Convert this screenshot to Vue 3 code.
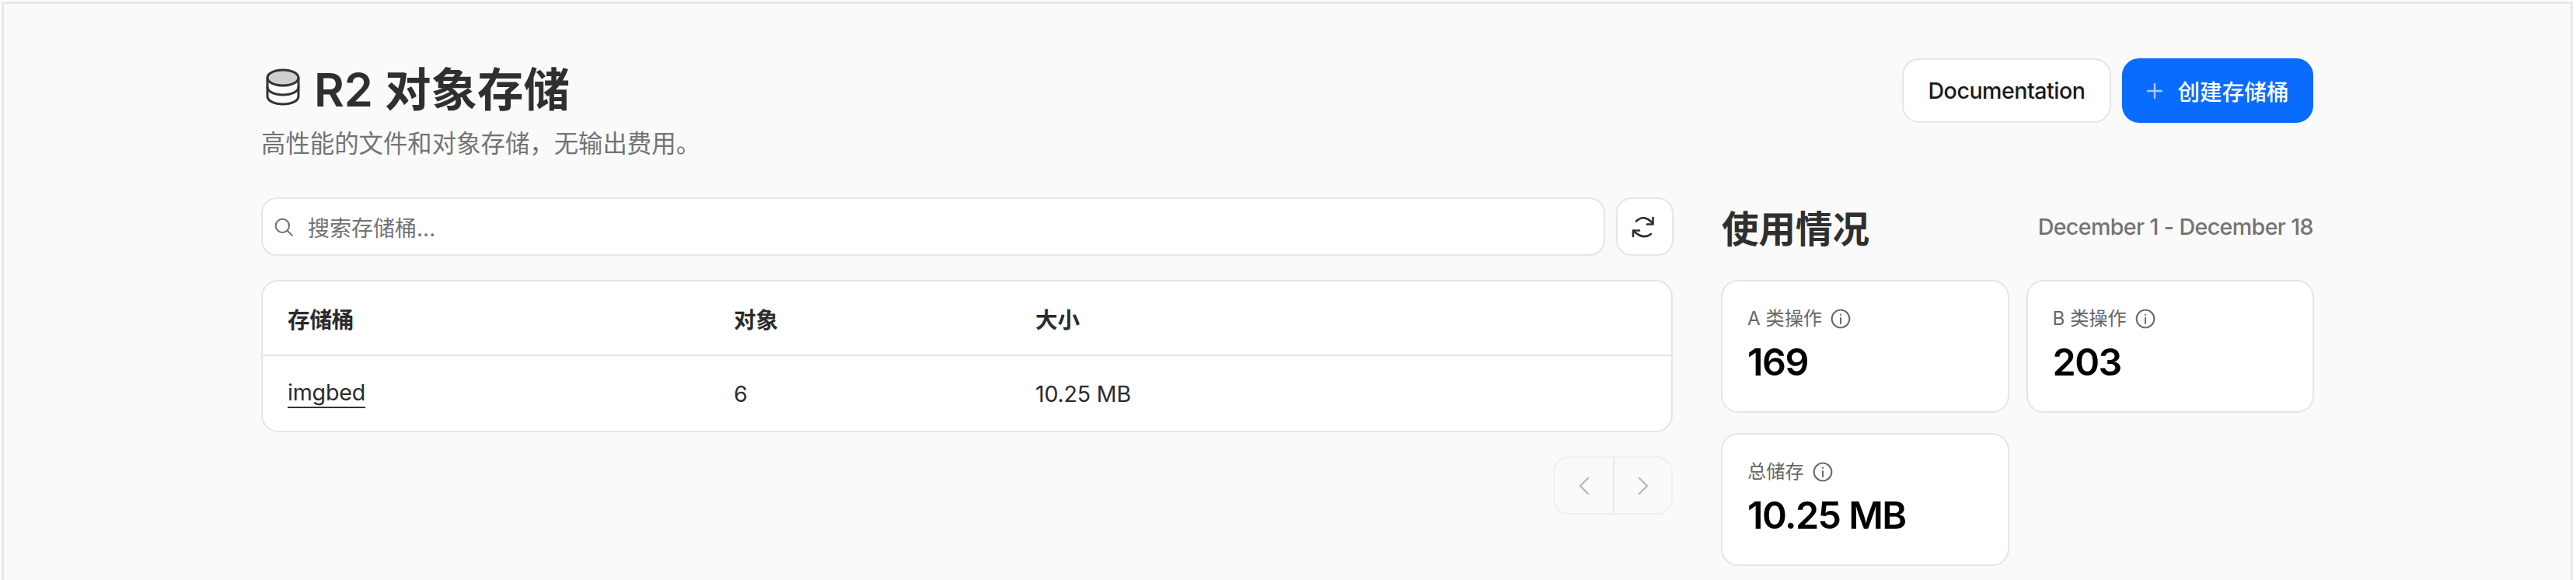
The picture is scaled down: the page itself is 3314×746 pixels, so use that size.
<script setup>
const columns = ['存储桶', '对象', '大小'];
const buckets = [{ name: 'imgbed', objects: 6, size: '10.25 MB' }];
const stats = [
  { label: 'A 类操作', value: '169' },
  { label: 'B 类操作', value: '203' },
  { label: '总储存', value: '10.25 MB' },
];
</script>

<template>
  <div class="frame">
    <main class="page">
      <header class="head">
        <div>
          <h1 class="title">
            <svg class="db-icon" viewBox="0 0 24 24" fill="none" stroke="#333" stroke-width="1.5" stroke-linecap="round" stroke-linejoin="round">
              <ellipse cx="12" cy="6" rx="10" ry="5" fill="#cfcfcf" />
              <path d="M2 6v12c0 2.800 4.500 5 10 5s10-2.200 10-5V6" />
              <path d="M2 12c0 2.800 4.500 5 10 5s10-2.200 10-5" />
            </svg>
            R2 对象存储
          </h1>
          <p class="sub">高性能的文件和对象存储，无输出费用。</p>
        </div>
        <div class="actions">
          <button class="btn">Documentation</button>
          <button class="btn primary">
            <svg class="plus" viewBox="0 0 20 20" fill="none" stroke="#a9c9ff" stroke-width="2.400" stroke-linecap="round"><path d="M10 1v18M1 10h18" /></svg>
            创建存储桶
          </button>
        </div>
      </header>

      <div class="content">
        <section class="left">
          <div class="search-row">
            <div class="search">
              <svg class="search-icon" viewBox="0 0 24 24" fill="none" stroke="#6e6e6e" stroke-width="1.8" stroke-linecap="round"><circle cx="10.500" cy="10.500" r="8" /><path d="m16.500 16.500 5.500 5.500" /></svg>
              <span>搜索存储桶...</span>
            </div>
            <button class="refresh">
              <svg viewBox="0 0 54 54" fill="none" stroke="#2f2f2f" stroke-width="2.600" stroke-linecap="round" stroke-linejoin="round">
                <path d="M16 19.500Q26 10 37 22" />
                <path d="M37.500 15V23.500H30" />
                <path d="M35 36Q25 44 12.500 32" />
                <path d="M12 39V31.500H20" />
              </svg>
            </button>
          </div>

          <div class="table">
            <div class="row header">
              <div v-for="c in columns" :key="c">{{ c }}</div>
            </div>
            <div v-for="b in buckets" :key="b.name" class="row body">
              <div><a class="link">{{ b.name }}</a></div>
              <div>{{ b.objects }}</div>
              <div>{{ b.size }}</div>
            </div>
          </div>

          <div class="pager-wrap">
            <div class="pager">
              <button>
                <svg viewBox="0 0 16 24" fill="none" stroke="#b8b8b8" stroke-width="2.400" stroke-linecap="round" stroke-linejoin="round"><path d="M13 2 3 12l10 10" /></svg>
              </button>
              <button>
                <svg viewBox="0 0 16 24" fill="none" stroke="#b8b8b8" stroke-width="2.400" stroke-linecap="round" stroke-linejoin="round"><path d="m3 2 10 10L3 22" /></svg>
              </button>
            </div>
          </div>
        </section>

        <aside class="right">
          <div class="usage-head">
            <h2>使用情况</h2>
            <span>December 1 - December 18</span>
          </div>
          <div class="cards">
            <div v-for="s in stats" :key="s.label" class="card">
              <div class="label">
                {{ s.label }}
                <svg class="info" viewBox="0 0 24 24" fill="none" stroke="#666" stroke-width="1.800" stroke-linecap="round"><circle cx="12" cy="12" r="10.500" /><path d="M12 11v6.500M12 7v.3" /></svg>
              </div>
              <div class="value">{{ s.value }}</div>
            </div>
          </div>
        </aside>
      </div>
    </main>
  </div>
</template>

<style>
html,
body {
  background: #fff;
  overflow: hidden;
}
</style>

<style scoped>
.frame {
  margin: 2px 4px 0 2px;
  height: 744px;
  box-sizing: border-box;
  border: 3px solid #e8e8e8;
  border-bottom: 0;
  background: #fafafa;
  color: #2f2f2f;
  font-family: Inter, "Noto Sans CJK SC", sans-serif;
}
.page {
  width: 2640px;
  margin-left: 331px;
  padding-top: 70px;
}
.head {
  display: flex;
  justify-content: space-between;
  align-items: flex-start;
}
.title {
  display: flex;
  align-items: center;
  gap: 16px;
  margin: 4px 0 0 4px;
  font-size: 59.500px;
  line-height: 72px;
  font-weight: 600;
}
.db-icon {
  width: 48px;
  height: 48px;
  margin-top: -6px;
}
.sub {
  margin: 14px 0 0;
  font-size: 31.400px;
  line-height: 40px;
  color: #737373;
}
.actions {
  display: flex;
  gap: 14px;
}
.btn {
  display: flex;
  align-items: center;
  justify-content: center;
  width: 269px;
  height: 83px;
  border: 2px solid #e5e5e5;
  border-radius: 22px;
  background: #fff;
  font: 500 28.600px Inter, "Noto Sans CJK SC", sans-serif;
  letter-spacing: -0.5px;
  color: #1a1a1a;
}
.primary {
  width: 246px;
  gap: 20px;
  background: #0a6cff;
  border-color: #0a6cff;
  color: #fff;
  letter-spacing: 0;
}
.plus {
  width: 20px;
  height: 20px;
}
.content {
  display: grid;
  grid-template-columns: 1816px 762px;
  gap: 62px;
  margin-top: 49px;
}
.search-row {
  display: flex;
  gap: 14px;
  height: 75px;
  margin-right: -1px;
}
.search {
  flex: 1;
  display: flex;
  align-items: center;
  gap: 18px;
  padding-left: 14px;
  background: #fff;
  border: 2px solid #e5e5e5;
  border-radius: 20px;
  font-size: 28px;
  color: #737373;
}
.search-icon {
  width: 26px;
  height: 26px;
}
.refresh {
  width: 74px;
  padding: 0;
  display: flex;
  align-items: center;
  justify-content: center;
  background: #fff;
  border: 2px solid #e5e5e5;
  border-radius: 20px;
}
.refresh svg {
  width: 54px;
  height: 54px;
}
.table {
  margin-top: 31px;
  background: #fff;
  border: 2px solid #e5e5e5;
  border-radius: 22px;
}
.row {
  display: grid;
  grid-template-columns: 574px 388px 1fr;
  padding-left: 32px;
  align-items: center;
  font-size: 28.600px;
  letter-spacing: -0.2px;
  color: #2b2b2b;
}
.header {
  height: 94px;
  font-weight: 600;
  border-bottom: 2px solid #e5e5e5;
}
.body {
  height: 96px;
}
.link {
  display: inline-block;
  line-height: 36px;
  border-bottom: 2px solid #333;
}
.pager-wrap {
  display: flex;
  justify-content: flex-end;
  margin-top: 31px;
}
.pager {
  display: flex;
  height: 75px;
  box-sizing: border-box;
  border: 2px solid #f0f0f0;
  border-radius: 20px;
}
.pager button {
  width: 75px;
  padding: 0;
  display: flex;
  align-items: center;
  justify-content: center;
  background: transparent;
  border: 0;
}
.pager button + button {
  border-left: 2px solid #e8e8e8;
}
.pager svg {
  width: 16px;
  height: 24px;
}
.usage-head {
  display: flex;
  justify-content: space-between;
  align-items: center;
  height: 75px;
  padding-left: 1px;
}
.usage-head h2 {
  margin: 0;
  font-size: 47.500px;
  font-weight: 600;
}
.usage-head span {
  font-size: 28.600px;
  font-weight: 500;
  letter-spacing: -0.6px;
  color: #737373;
}
.cards {
  display: grid;
  grid-template-columns: 1fr 1fr;
  column-gap: 22px;
  row-gap: 26px;
  margin-top: 31px;
  margin-right: -1px;
}
.card {
  height: 171px;
  box-sizing: border-box;
  padding: 30px 32px;
  background: #fff;
  border: 2px solid #e5e5e5;
  border-radius: 22px;
}
.label {
  display: flex;
  align-items: center;
  gap: 11px;
  font-size: 24.200px;
  line-height: 36px;
  color: #666;
}
.info {
  width: 26px;
  height: 26px;
}
.value {
  margin-top: 8px;
  font-size: 48.400px;
  line-height: 60px;
  font-weight: 600;
  letter-spacing: -1.5px;
  color: #000;
}
</style>
